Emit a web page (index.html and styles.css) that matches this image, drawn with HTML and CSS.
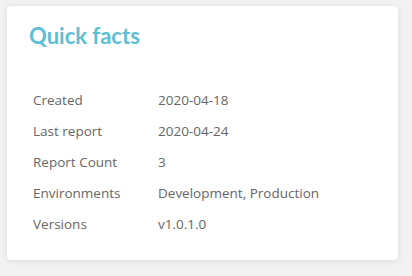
FILE: index.html
```html
<!DOCTYPE html>
<html>
<head>
<meta charset="utf-8">
<link rel="stylesheet" href="styles.css">
</head>
<body>
<div class="card">
  <h2 class="title">Quick facts</h2>
  <table class="facts">
    <tr><td class="label">Created</td><td>2020-04-18</td></tr>
    <tr><td class="label">Last report</td><td>2020-04-24</td></tr>
    <tr><td class="label">Report Count</td><td>3</td></tr>
    <tr><td class="label">Environments</td><td>Development, Production</td></tr>
    <tr><td class="label">Versions</td><td>v1.0.1.0</td></tr>
  </table>
</div>
</body>
</html>
```
FILE: styles.css
```css
html, body {
  margin: 0;
  padding: 0;
  background: #f2f2f2;
  font-family: "Open Sans", "Noto Sans", sans-serif;
}
body {
  padding: 6px 14px 16px 7px;
  height: 276px;
  box-sizing: border-box;
}
.card {
  background: #fff;
  border-radius: 4px;
  box-shadow: 0 1px 6px rgba(0,0,0,0.10);
  height: 254px;
  box-sizing: border-box;
  padding: 16px 22px 0 22px;
}
.title {
  margin: 0;
  font-family: "Lato", "Open Sans", sans-serif;
  font-size: 22px;
  font-weight: 700;
  color: #5bc0d6;
  line-height: 28px;
}
.facts {
  margin-top: 34px;
  border-collapse: collapse;
  font-size: 13.5px;
  color: #666;
}
.facts td {
  padding: 0 4px;
  height: 31px;
}
.facts td.label {
  width: 117px;
}
```
